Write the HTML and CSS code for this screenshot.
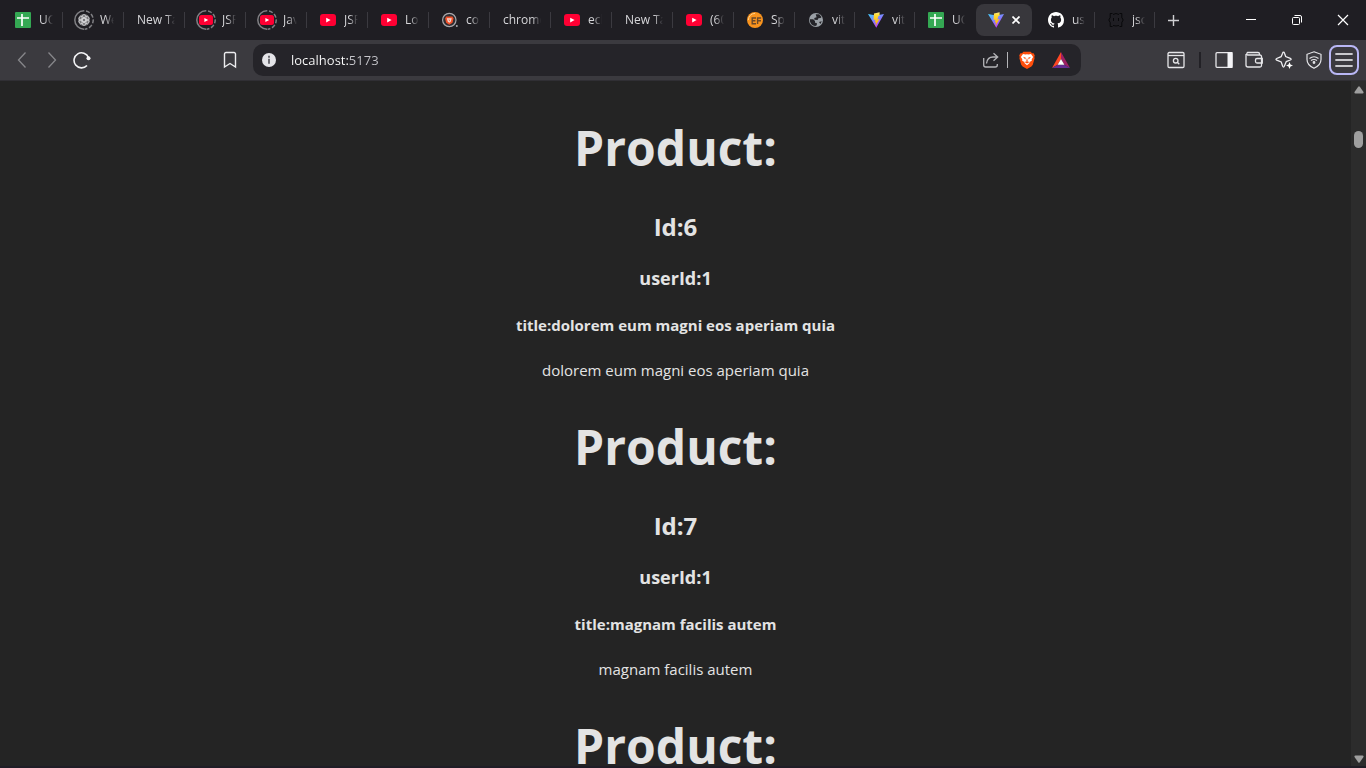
FILE: index.html
```html
<!DOCTYPE html>
<html lang="en">
<head>
<meta charset="utf-8">
<meta name="viewport" content="width=device-width, initial-scale=1">
<title>localhost:5173</title>
<link rel="stylesheet" href="styles.css">
</head>
<body>
<svg class="defs" aria-hidden="true">
  <defs>
    <linearGradient id="vite-a" x1="0" y1="0" x2="0.6" y2="1"><stop offset="0" stop-color="#41d1ff"/><stop offset="1" stop-color="#bd34fe"/></linearGradient>
    <linearGradient id="vite-b" x1="0" y1="0" x2="0" y2="1"><stop offset="0" stop-color="#ffea83"/><stop offset="0.2" stop-color="#ffdd35"/><stop offset="1" stop-color="#ffa800"/></linearGradient>
  </defs>
  <symbol id="sheets" viewBox="0 0 16 16"><rect width="16" height="16" rx="1" fill="#34a853"/><path d="M2 6h12M7 2v12" stroke="#fff" stroke-width="1.7"/></symbol>
  <symbol id="youtube" viewBox="0 0 16 16"><rect y="2" width="16" height="12" rx="3" fill="#ff0033"/><path d="M6.2 5.8v4.6L10.6 8z" fill="#fff"/></symbol>
  <symbol id="youtube-ring" viewBox="0 0 20 20"><circle cx="10" cy="10" r="9.2" fill="none" stroke="#808084" stroke-width="1.5" stroke-dasharray="29 1.800 4 1.800 4 1.800 4 1.800 4 1.800 2.800 .8" transform="rotate(90 10 10)"/><rect x="3" y="5" width="14" height="10" rx="2.5" fill="#ff0033"/><path d="M8.4 8v4l3.8-2z" fill="#fff"/></symbol>
  <symbol id="gpt-ring" viewBox="0 0 20 20"><circle cx="10" cy="10" r="9.2" fill="none" stroke="#808084" stroke-width="1.5" stroke-dasharray="29 1.800 4 1.800 4 1.800 4 1.800 4 1.800 2.800 .8" transform="rotate(90 10 10)"/><circle cx="10" cy="10" r="6" fill="#77777a"/><g fill="none" stroke="#d2d2d4" stroke-width=".8"><rect id="petal" x="8" y="4.6" width="4" height="7.4" rx="2"/><use href="#petal" transform="rotate(60 10 10)"/><use href="#petal" transform="rotate(120 10 10)"/><use href="#petal" transform="rotate(180 10 10)"/><use href="#petal" transform="rotate(240 10 10)"/><use href="#petal" transform="rotate(300 10 10)"/></g></symbol>
  <symbol id="brave-lion" viewBox="0 0 16 18"><path d="M4.4.8h7.2l1.4 1.5 1.6-.1 1.2 2.4-.5 1.3.3 1.4-1.8 6.5-1.4 1.8L8 18l-4.4-2.4-1.4-1.8L.4 7.3l.3-1.4L.2 4.600l1.200-2.400 1.600.1z" fill="#ff4e0c"/><path d="M8 3.200l1.600.3L12 3l2.100 2.900-1.400 2.400.1 1.500-2.300 1.300.1 1-2.600 2.200-2.600-2.200.1-1-2.300-1.300.1-1.500-1.400-2.400L4 3l2.400.5z" fill="#fff"/><path d="M4 5.700l2.800 1-.5 1.700zM12 5.700l-2.800 1 .5 1.700zM8 7l.7 2.400L8 11l-.7-1.600zM5.500 11l2.500-.8 2.500.8L8 12.400z" fill="#ff4e0c"/></symbol>
  <symbol id="brave-tab" viewBox="0 0 16 16"><circle cx="7.3" cy="8" r="6.7" fill="#302d31" stroke="#a8a8ac" stroke-width="1.2"/><path d="M4.2 4.5h6.2l1.1 2-1 4.2-3.2 2-3.2-2-1-4.2z" fill="#f05029"/><path d="M4.8 6.2h5l-1.1 3.6-1.4 1-1.4-1z" fill="#f4d7d0"/><path d="M6.4 7.3l.9.8.9-.8-.9 2.3z" fill="#f05029"/><circle cx="14.8" cy="14" r="1" fill="#a8a8ac"/></symbol>
  <symbol id="ef" viewBox="0 0 16 16"><circle cx="8" cy="8" r="8" fill="#f7931e"/><path d="M1.4 8A6.6 6.6 0 0 1 8 1.4" fill="none" stroke="#ffd08a"/><path d="M9 6H5.2v5.7H9M5.2 8.8h3.2M14.1 6h-3.5v6M10.6 8.8H14" fill="none" stroke="#69482a" stroke-width="1.4"/></symbol>
  <symbol id="globe" viewBox="0 0 16 16"><circle cx="8" cy="8" r="7" fill="#9aa0a6"/><path d="M1.8 7.2l3.4.1 1.8 1.8v1.7l1.8.1v2.3l-1.5.9C3.6 13.700 1.700 10.500 1.800 7.200zM7.700 2.200l3.500 0 2.300 2.700-.9 1.200-2.200.1-.8 1.700-3.200-.1-.1-1.700 2.300-.8zM11 10l2.800-.7-1.400 2.600z" fill="#242429"/></symbol>
  <symbol id="vite" viewBox="0 0 16 16"><path d="M0 2l8 1.400L16 2 8.300 15.700z" fill="url(#vite-a)"/><path d="M11.600.3L6 1.500 5.500 8l2-.4-.7 3 1.300-.3-.8 4L11.500 7l-2.100.4 1-3.300 1.200-.3z" fill="url(#vite-b)"/></symbol>
  <symbol id="github" viewBox="0 0 16 16"><path fill="#fff" d="M8 0C3.580 0 0 3.580 0 8c0 3.540 2.290 6.530 5.470 7.590.4.070.55-.17.55-.38 0-.19-.01-.82-.01-1.490-2.010.37-2.530-.49-2.690-.94-.09-.23-.48-.94-.82-1.130-.28-.15-.68-.52-.01-.53.63-.01 1.080.58 1.230.82.72 1.210 1.870.87 2.330.66.070-.52.28-.87.51-1.070-1.780-.2-3.640-.89-3.640-3.950 0-.87.31-1.590.82-2.150-.08-.2-.36-1.020.08-2.120 0 0 .67-.21 2.200.82.64-.18 1.320-.27 2-.27s1.360.09 2 .27c1.530-1.040 2.200-.82 2.200-.82.44 1.100.16 1.920.08 2.120.51.56.82 1.270.82 2.150 0 3.070-1.870 3.750-3.650 3.950.29.25.54.73.54 1.480 0 1.070-.01 1.930-.01 2.200 0 .21.15.46.55.38A8.010 8.010 0 0 0 16 8c0-4.420-3.580-8-8-8z"/></symbol>
  <symbol id="json" viewBox="0 0 16 16"><path d="M4.500 1.500H2.200v4L.8 8l1.400 2.500v4h2.300M11.500 1.500h2.300v4L15.200 8l-1.400 2.500v4h-2.300M5 2.500q3-2 6 0M5 13.500q3 1 6 0M5.500 6v3M10.500 6v3" fill="none" stroke="#08080a" stroke-width="1"/></symbol>
</svg>

<div class="browser">
  <header class="tab-strip">
    <nav class="tabs" aria-label="Tabs">
      <button class="tab"><svg class="icon"><use href="#sheets"/></svg><span class="tab-title">UC</span></button>
      <button class="tab"><svg class="icon ring"><use href="#gpt-ring"/></svg><span class="tab-title">We</span></button>
      <button class="tab"><span class="tab-title">New Ta</span></button>
      <button class="tab"><svg class="icon ring"><use href="#youtube-ring"/></svg><span class="tab-title">JSP</span></button>
      <button class="tab"><svg class="icon ring"><use href="#youtube-ring"/></svg><span class="tab-title">Jav</span></button>
      <button class="tab"><svg class="icon"><use href="#youtube"/></svg><span class="tab-title">JSP</span></button>
      <button class="tab"><svg class="icon"><use href="#youtube"/></svg><span class="tab-title">Lo</span></button>
      <button class="tab"><svg class="icon"><use href="#brave-tab"/></svg><span class="tab-title">co</span></button>
      <button class="tab"><span class="tab-title">chrome</span></button>
      <button class="tab"><svg class="icon"><use href="#youtube"/></svg><span class="tab-title">ecl</span></button>
      <button class="tab"><span class="tab-title">New Ta</span></button>
      <button class="tab"><svg class="icon"><use href="#youtube"/></svg><span class="tab-title">(60</span></button>
      <button class="tab"><svg class="icon"><use href="#ef"/></svg><span class="tab-title">Sp</span></button>
      <button class="tab narrow"><svg class="icon"><use href="#globe"/></svg><span class="tab-title">vit</span></button>
      <button class="tab narrow"><svg class="icon"><use href="#vite"/></svg><span class="tab-title">vit</span></button>
      <button class="tab narrow plain"><svg class="icon"><use href="#sheets"/></svg><span class="tab-title">UC</span></button>
      <button class="tab narrow plain active" aria-label="Close tab"><svg class="icon"><use href="#vite"/></svg><svg class="close" viewBox="0 0 8 8"><path d="M.5.5l7 7M7.500.5l-7 7" stroke="#fff" stroke-width="1.700"/></svg></button>
      <button class="tab narrow"><svg class="icon"><use href="#github"/></svg><span class="tab-title">us</span></button>
      <button class="tab narrow"><svg class="icon"><use href="#json"/></svg><span class="tab-title">jsc</span></button>
    </nav>
    <button class="new-tab" aria-label="New tab"><svg width="11" height="11" viewBox="0 0 11 11"><path d="M5.500 0v11M0 5.500h11" stroke="#d0d0d3" stroke-width="1.400"/></svg></button>
    <div class="window-controls">
      <button aria-label="Minimize"><svg width="12" height="12" viewBox="0 0 12 12"><path d="M1 5.500h10" stroke="#fff"/></svg></button>
      <button aria-label="Restore"><svg width="12" height="12" viewBox="0 0 12 12" fill="none" stroke="#fff"><rect x="1.500" y="3.500" width="7" height="7" rx="1"/><path d="M3.500 1.500h5.500a1.500 1.500 0 0 1 1.500 1.500v5.500"/></svg></button>
      <button aria-label="Close"><svg width="12" height="12" viewBox="0 0 12 12"><path d="M1 1l10 10M11 1L1 11" stroke="#fff" stroke-width="1.200"/></svg></button>
    </div>
  </header>

  <div class="toolbar">
    <div class="nav-buttons">
      <button aria-label="Back"><svg width="18" height="18" viewBox="0 0 18 18" fill="none" stroke="#87878b" stroke-width="1.300"><path d="M12.500 1.500L5.500 9l7 7.500"/></svg></button>
      <button aria-label="Forward"><svg width="18" height="18" viewBox="0 0 18 18" fill="none" stroke="#87878b" stroke-width="1.300"><path d="M5.500 1.500l7 7.500-7 7.500"/></svg></button>
      <button aria-label="Reload"><svg width="18" height="18" viewBox="0 0 18 18"><path d="M15.500 6.500A7.500 7.500 0 1 0 14 14.500" fill="none" stroke="#f4f4f6" stroke-width="1.600"/><circle cx="15.500" cy="7.300" r="2" fill="#f4f4f6"/></svg></button>
    </div>
    <button class="bookmark" aria-label="Bookmark"><svg width="14" height="18" viewBox="0 0 14 18"><path d="M1.500 3a1.500 1.500 0 0 1 1.500-1.500h8A1.500 1.500 0 0 1 12.500 3v13L7 12.500 1.500 16z" fill="none" stroke="#ececef" stroke-width="1.400"/></svg></button>
    <div class="address">
      <svg width="14" height="14" viewBox="0 0 14 14"><circle cx="7" cy="7" r="7" fill="#e4e4e8"/><path d="M7 2.700v2M7 5.800v5" stroke="#4c4c53" stroke-width="1.600"/></svg>
      <input class="url" aria-label="Address" value="localhost:5173">
      <button aria-label="Share"><svg width="18" height="18" viewBox="0 0 18 18" fill="none" stroke="#b4b4b8" stroke-width="1.300"><path d="M1.700 7v7a2 2 0 0 0 2 2h9.600a2 2 0 0 0 2-2v-1M4.500 12.500C5 8.500 7.500 6 11 6h4.500M11.500 2.300L15.700 6l-4.200 3.700"/></svg></button>
      <span class="divider light"></span>
      <button aria-label="Shields"><svg width="16" height="18"><use href="#brave-lion"/></svg></button>
      <button class="rewards" aria-label="Rewards"><svg width="18" height="16" viewBox="0 0 18 16"><path d="M9 0L0 16l5.600-3.200L9 7z" fill="#ff4724"/><path d="M9 0l9 16-5.600-3.200L9 7z" fill="#9e1f63"/><path d="M0 16h18l-5.600-3.200H5.600z" fill="#662d91"/><path d="M9 7l3.400 5.800H5.600z" fill="#fff"/></svg></button>
    </div>
    <div class="actions">
      <button aria-label="Find"><svg width="18" height="18" viewBox="0 0 18 18" fill="none" stroke="#e6e6e9" stroke-width="1.300"><rect x="1" y="1.500" width="16" height="15" rx="1.200"/><path d="M1 4.500h16"/><circle cx="8.700" cy="9.700" r="2.300"/><path d="M10.500 11.500l1.800 1.800"/></svg></button>
      <span class="divider dark"></span>
      <button aria-label="Sidebar"><svg width="18" height="18" viewBox="0 0 18 18"><rect x="1" y="1.700" width="16" height="14.600" rx="1" fill="none" stroke="#e6e6e9" stroke-width="1.300"/><path d="M12.500 1h5v16h-5z" fill="#f4f4f7"/></svg></button>
      <button aria-label="Wallet"><svg width="18" height="18" viewBox="0 0 18 18" fill="none" stroke="#e6e6e9" stroke-width="1.300"><path d="M16.500 6.500V5.500a1.500 1.500 0 0 0-1.500-1.500H2.500a1.500 1.500 0 0 1 0-2.500H13a1.500 1.500 0 0 1 1.500 1.500v1M1 3v11a2 2 0 0 0 2 2h12a1.500 1.500 0 0 0 1.500-1.500V6M17.300 7.500h-5.300a1.500 1.500 0 0 0-1.500 1.500v1.500A1.500 1.500 0 0 0 12 12h5.300z"/></svg></button>
      <button aria-label="Leo"><svg width="18" height="18" viewBox="0 0 18 18"><path d="M8.500 1.200q.7 0 1 1l1.200 3.300 4.600 1.800q1.700.9 0 1.700l-4 1.600-2 4.600q-.8 1.600-1.600 0L6.200 11 1.700 9.200q-1.500-.9 0-1.700l4.400-1.800 1.500-3.500q.3-1 .9-1z" fill="none" stroke="#eeeef1" stroke-width="1.300"/><path d="M14.500 11l1 2.500L18 14.500l-2.500 1-1 2.500-1-2.500-2.500-1 2.500-1z" fill="#fff"/></svg></button>
      <button aria-label="VPN"><svg width="18" height="18" viewBox="0 0 18 18" fill="none" stroke="#e6e6e9" stroke-width="1.200"><path d="M9 .8l7 2.500v5.200c0 4-3 7-7 8.800-4-1.800-7-4.800-7-8.800V3.300z"/><path d="M4.500 7.500q4.500-3.500 9 0M6 9.600q3-2.200 6 0"/><circle cx="9" cy="11.500" r=".8" fill="#e6e6e9"/></svg></button>
      <button class="menu" aria-label="Menu"><svg width="18" height="16" viewBox="0 0 18 16"><path d="M1 2h16M1 8h16M1 14h16" stroke="#c9c9cd" stroke-width="1.800" stroke-linecap="round"/></svg></button>
    </div>
  </div>

  <div class="viewport">
    <main class="page">
      <article class="product">
        <h1>Product:</h1>
        <h2>Id:6</h2>
        <h3>userId:1</h3>
        <h4>title:dolorem eum magni eos aperiam quia</h4>
        <p>dolorem eum magni eos aperiam quia</p>
      </article>
      <article class="product">
        <h1>Product:</h1>
        <h2>Id:7</h2>
        <h3>userId:1</h3>
        <h4>title:magnam facilis autem</h4>
        <p>magnam facilis autem</p>
      </article>
      <article class="product">
        <h1>Product:</h1>
      </article>
    </main>
    <div class="scrollbar" aria-hidden="true">
      <svg width="10" height="8" viewBox="0 0 10 8"><path d="M4.200.8q.8-1 1.600 0L9.500 6q.4 1.500-1 1.500h-7Q.1 7.500.5 6z" fill="#9f9f9f"/></svg>
      <span class="thumb"></span>
      <svg class="down" width="10" height="8" viewBox="0 0 10 8"><path d="M4.200 7.200q.8 1 1.600 0L9.500 2q.4-1.500-1-1.500h-7Q.1.5.5 2z" fill="#9f9f9f"/></svg>
    </div>
  </div>
</div>
</body>
</html>
```
FILE: styles.css
```css
* { box-sizing: border-box; }

body {
  margin: 0;
  background: #242424;
  color: #e3e3e3;
  font-family: "Open Sans", "Noto Sans", sans-serif;
}

button {
  display: flex;
  align-items: center;
  justify-content: center;
  padding: 0;
  border: 0;
  background: none;
  color: inherit;
  font: inherit;
}

svg { flex: none; display: block; }

.defs { position: absolute; width: 0; height: 0; }

.browser {
  display: flex;
  flex-direction: column;
  height: 100vh;
  overflow: hidden;
  border-bottom: 2px solid #1f1d26;
}

/* Tab strip */
.tab-strip {
  display: flex;
  flex: none;
  height: 40px;
  padding-left: 2px;
  background: #1f1e23;
}

.tabs { display: flex; align-items: center; }

.tab {
  display: flex;
  justify-content: flex-start;
  gap: 8px;
  width: 61px;
  height: 16px;
  padding: 0 9px 0 13px;
  border-right: 1px solid #3b3a40;
  color: #d6d6d9;
  font-size: 12px;
  line-height: 16px;
}

.tab.narrow { width: 60px; }
.tab.plain { border-right-color: transparent; }

.tab.active {
  width: 56px;
  height: 32px;
  margin: 0 3px 0 1px;
  padding: 0 11px 0 12px;
  border: 0;
  border-radius: 8px;
  background: #38373c;
}

.icon { width: 16px; height: 16px; }
.icon.ring { width: 20px; height: 20px; margin: 0 -2px; }
.close { width: 8px; height: 8px; }

.tab-title {
  flex: 1;
  min-width: 0;
  overflow: hidden;
  text-align: left;
  white-space: nowrap;
  mask-image: linear-gradient(to left, transparent, #000 9px);
}

.new-tab { width: 36px; }

.window-controls { display: flex; margin-left: auto; }
.window-controls button { width: 46px; }

/* Toolbar */
.toolbar {
  display: flex;
  flex: none;
  align-items: center;
  height: 41px;
  padding-right: 7px;
  background: #3b3a3f;
  border-bottom: 1px solid #302f34;
}

.nav-buttons { display: flex; padding-left: 7px; }
.nav-buttons button { width: 30px; height: 30px; }
.bookmark { width: 30px; height: 30px; margin-left: 118px; }

.address {
  display: flex;
  flex: 1;
  align-items: center;
  height: 32px;
  margin: 0 80px 0 8px;
  padding: 0 11px 0 9px;
  border-radius: 10px;
  background: #252429;
}

.url {
  flex: 1;
  min-width: 0;
  height: 24px;
  margin-left: 15px;
  padding: 0;
  border: 0;
  outline: 0;
  background: linear-gradient(90deg, #fff 58px, #c6c6cb 58px);
  background-clip: text;
  color: transparent;
  font: 13px/24px "Open Sans", "Noto Sans", sans-serif;
}

.divider { width: 1px; height: 16px; }
.divider.light { margin: 0 11px 0 7px; background: #b4b4b8; }
.divider.dark { width: 2px; margin: 0 8px; background: #222126; }
.rewards { margin-left: 17px; }

.actions { display: flex; align-items: center; }
.actions button { width: 30px; height: 30px; }
.actions .menu { border: 2px solid #b9b7f5; border-radius: 8px; }

/* Page */
.viewport {
  display: flex;
  flex: 1;
  min-height: 0;
}

.page {
  flex: 1;
  overflow: hidden;
  padding-top: 39px;
  text-align: center;
}

.product { margin-bottom: 37px; }
.product > * { margin: 0; }

.product h1 { margin-bottom: 33px; font-size: 48px; line-height: 56px; }
.product h2 { margin-bottom: 19px; font-size: 24px; line-height: 36px; }
.product h3 { margin-bottom: 21px; font-size: 18px; line-height: 28px; }
.product h4 { margin-bottom: 21px; font-size: 15px; line-height: 24px; }
.product p { font-size: 15px; line-height: 24px; }

.scrollbar {
  display: flex;
  flex: none;
  flex-direction: column;
  align-items: center;
  width: 15px;
  padding: 5px 0 3px;
  background: #2c2c2c;
}

.thumb {
  width: 9px;
  height: 17px;
  margin-top: 37px;
  border-radius: 5px;
  background: #9f9f9f;
}

.down { margin-top: auto; }
```
